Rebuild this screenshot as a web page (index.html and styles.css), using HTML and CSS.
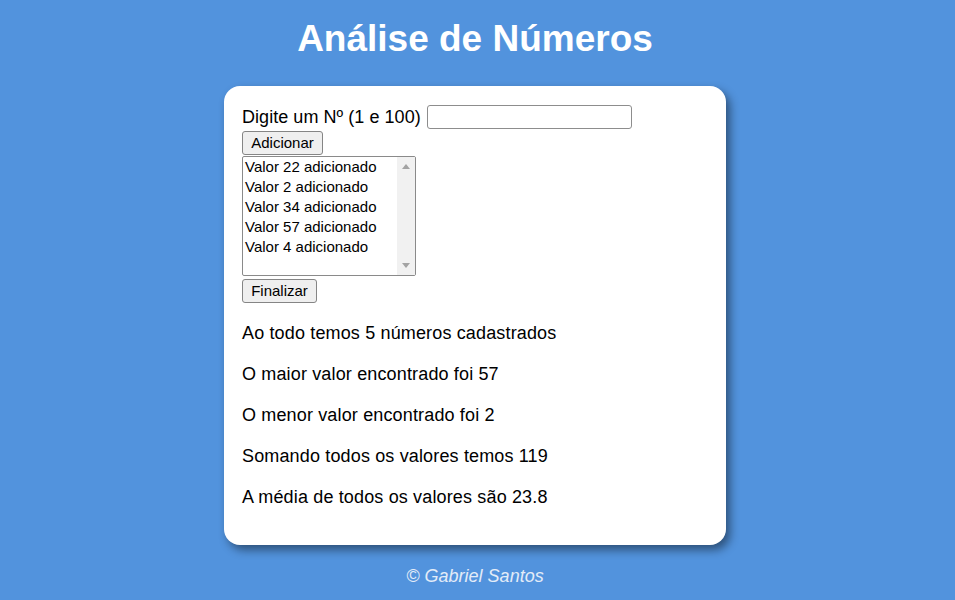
FILE: index.html
```html
<!DOCTYPE html>
<html lang="pt-BR">
<head>
<meta charset="utf-8">
<title>Análise de Números</title>
<link rel="stylesheet" href="styles.css">
</head>
<body>
<div class="page">
  <header class="header">
    <h1 class="title">Análise de Números</h1>
  </header>
  <section class="card">
    <div class="entry">
      <label class="entry-label" for="num">Digite um Nº (1 e 100)</label>
      <input class="entry-input" id="num" type="number">
    </div>
    <button class="btn btn-add" type="button">Adicionar</button>
    <div class="listbox">
      <div class="listbox-items">
        <div class="listbox-item">Valor 22 adicionado</div>
        <div class="listbox-item">Valor 2 adicionado</div>
        <div class="listbox-item">Valor 34 adicionado</div>
        <div class="listbox-item">Valor 57 adicionado</div>
        <div class="listbox-item">Valor 4 adicionado</div>
      </div>
      <div class="scrollbar">
        <span class="arrow arrow-up"></span>
        <span class="arrow arrow-down"></span>
      </div>
    </div>
    <button class="btn btn-end" type="button">Finalizar</button>
    <div class="results">
      <p class="result">Ao todo temos 5 números cadastrados</p>
      <p class="result">O maior valor encontrado foi 57</p>
      <p class="result">O menor valor encontrado foi 2</p>
      <p class="result">Somando todos os valores temos 119</p>
      <p class="result">A média de todos os valores são 23.8</p>
    </div>
  </section>
  <footer class="footer">
    <p class="credit">© Gabriel Santos</p>
  </footer>
</div>
</body>
</html>
```

FILE: styles.css
```css
html, body {
  margin: 0;
  padding: 0;
}

body {
  background: #5293dd;
  font-family: "Liberation Sans", Arial, sans-serif;
  color: #000;
  height: 600px;
  overflow: hidden;
}

.page {
  padding-right: 5px;
  display: flex;
  flex-direction: column;
  align-items: center;
}

.header {
  padding-top: 17px;
}

.title {
  margin: 0;
  font-size: 37px;
  line-height: 43px;
  font-weight: bold;
  color: #fff;
  text-align: center;
}

.card {
  margin-top: 26px;
  width: 502px;
  box-sizing: border-box;
  background: #fff;
  border-radius: 16px;
  padding: 19px 18px 37px;
  box-shadow: 4px 5px 10px rgba(0, 0, 0, 0.45);
  display: flex;
  flex-direction: column;
  align-items: flex-start;
}

.entry {
  display: flex;
  align-items: center;
  height: 24px;
}

.entry-label {
  font-size: 18px;
  line-height: 22px;
  margin-right: 6px;
  letter-spacing: 0.05px;
}

.entry-input {
  width: 205px;
  height: 24px;
  box-sizing: border-box;
  border: 1px solid #8d8d8d;
  border-radius: 3px;
  margin: 0;
  padding: 0 3px;
  background: #fff;
  -moz-appearance: textfield;
  appearance: textfield;
}

.entry-input::-webkit-outer-spin-button,
.entry-input::-webkit-inner-spin-button {
  -webkit-appearance: none;
  margin: 0;
}

.btn {
  appearance: none;
  -webkit-appearance: none;
  height: 24px;
  box-sizing: border-box;
  padding: 0 8px;
  margin: 0;
  border: 1px solid #858585;
  border-radius: 3px;
  background: #efefef;
  font-family: "Liberation Sans", Arial, sans-serif;
  font-size: 15px;
  line-height: 20px;
  color: #000;
}

.btn-add {
  margin-top: 2px;
  width: 81px;
}

.btn-end {
  margin-top: 3px;
  width: 75px;
}

.listbox {
  margin-top: 1px;
  width: 174px;
  height: 120px;
  box-sizing: border-box;
  border: 1px solid #8a8a8a;
  border-radius: 2px;
  display: flex;
  background: #fff;
}

.listbox-items {
  flex: 1;
  padding: 0 0 0 2px;
}

.listbox-item {
  font-size: 15px;
  line-height: 20px;
  white-space: nowrap;
}

.scrollbar {
  width: 18px;
  background: #f1f1f1;
  display: flex;
  flex-direction: column;
  justify-content: space-between;
  align-items: center;
  padding: 7px 0 7px;
  box-sizing: border-box;
}

.arrow {
  width: 0;
  height: 0;
  border-left: 4px solid transparent;
  border-right: 4px solid transparent;
}

.arrow-up {
  border-bottom: 5px solid #a3a3a3;
}

.arrow-down {
  border-top: 5px solid #a3a3a3;
}

.results {
  margin-top: 19px;
  display: flex;
  flex-direction: column;
  gap: 19px;
}

.result {
  margin: 0;
  font-size: 18px;
  line-height: 22px;
  letter-spacing: 0.15px;
}

.footer {
  margin-top: 20px;
}

.credit {
  margin: 0;
  font-size: 18px;
  line-height: 22px;
  font-style: italic;
  color: #e3ecf8;
  text-align: center;
}
```
